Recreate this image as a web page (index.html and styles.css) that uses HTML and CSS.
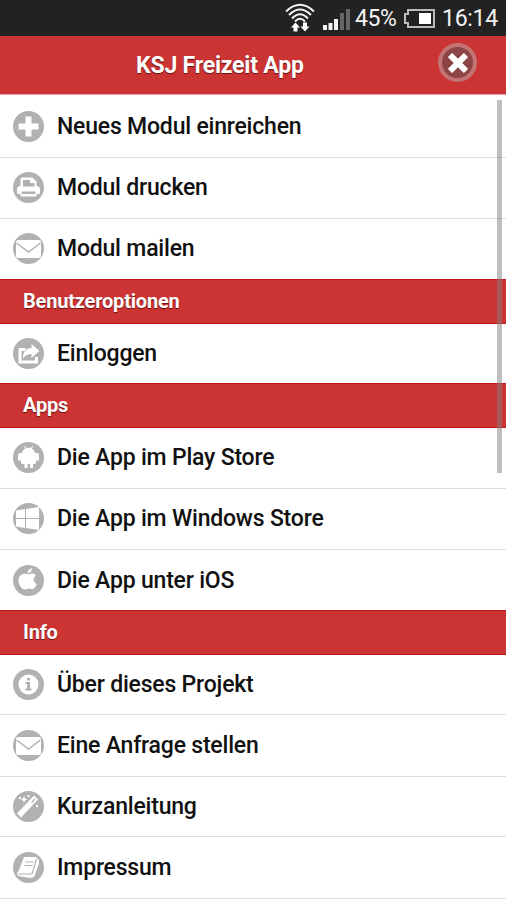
FILE: index.html
```
<!DOCTYPE html>
<html lang="de">
<head>
	<meta charset="UTF-8">
	<title>KSJ Freizeit App</title>
	<link rel="stylesheet" href="styles.css">
</head>
<body>
	<div class="status">
		<svg class="wifi" width="30" height="30" viewBox="0 0 30 30">
			<g fill="none" stroke="#f2f2f2" stroke-width="2">
				<path d="M1 8.500Q15 -5 29 8.500"/>
				<path d="M4 12Q15 1 26 12"/>
				<path d="M7 15.500Q15 7 23 15.500"/>
				<path d="M10 18.500Q15 13 20 18.500"/>
			</g>
			<path fill="#fff" d="M10.500 19.500l4.500 5h-2.500v4h-4v-4H6zM18 19.500h4v4h2.500l-4.500 5-4.500-5H18z"/>
		</svg>
		<svg class="signal" width="27" height="23" viewBox="0 0 27 23">
			<path fill="#f2f2f2" d="M0 17h4v5H0zM5.500 15h4v7h-4zM11 11h4v11h-4z"/>
			<path fill="#666" d="M17 5h4v17h-4zM23 1h4v21h-4z"/>
		</svg>
		<span class="percent">45%</span>
		<svg class="battery" width="32" height="19" viewBox="0 0 32 19">
			<path fill="none" stroke="#bbb" stroke-width="2" d="M5 1h26v17H5v-4H2V5h3z"/>
			<path fill="#fff" d="M16 4h12v11H16z"/>
		</svg>
		<span class="time">16:14</span>
	</div>
	<div class="header">
		<h1>KSJ Freizeit App</h1>
		<a class="close" href="#">
			<svg width="20" height="20" viewBox="0 0 20 20"><path fill="none" stroke="#fff" stroke-width="6" d="M2 2l16 16M18 2L2 18"/></svg>
		</a>
	</div>
	<div class="content">
		<ul>
			<li class="first">
				<svg class="icon" viewBox="0 0 31 31"><circle cx="15.500" cy="15.500" r="15.500"/><path class="w" d="M12.500 5.500h6v7h7v6h-7v7h-6v-7h-7v-6h7z"/></svg>
				<a href="#">Neues Modul einreichen</a>
			</li>
			<li class="up">
				<svg class="icon" viewBox="0 0 31 31"><circle cx="15.500" cy="15.500" r="15.500"/><path class="w" d="M9 5.500h10.500l4 4V14q3.500 0 3.500 3.500V21q0 1-1 1h-2.500v2.500h-16V22H5q-1 0-1-1v-3.500Q4 14 7.500 14V7q0-1.500 1.500-1.500z"/><path d="M10 8v6.500h11.500V11H17V8zM8.500 19.500h14V22h-14z"/></svg>
				<a href="#">Modul drucken</a>
			</li>
			<li class="mid up">
				<svg class="icon" viewBox="0 0 31 31"><circle cx="15.500" cy="15.500" r="15.500"/><rect class="w" x="3" y="7" width="25" height="18" rx="2"/><path class="l" d="M3.500 10l12 9 12-9"/></svg>
				<a href="#">Modul mailen</a>
			</li>
		</ul>
		<h2>Benutzeroptionen</h2>
		<ul>
			<li class="last">
				<svg class="icon" viewBox="0 0 31 31"><circle cx="15.500" cy="15.500" r="15.500"/><path fill="none" stroke="#fff" stroke-width="3" d="M12.500 11.500H7v12.500h16.500v-5"/><path class="w" d="M18.500 6l8 7-8 7v-4c-4 0-6.500 1.500-8.500 5 0-7 3-11 8.500-11z"/></svg>
				<a href="#">Einloggen</a>
			</li>
		</ul>
		<h2>Apps</h2>
		<ul>
			<li class="up">
				<svg class="icon" viewBox="0 0 31 31"><circle cx="15.500" cy="15.500" r="15.500"/><path class="w" d="M9 11q.5-3.500 3.500-4.500L11 4.500l.6-.5 2 2q2-.5 4 0l2-2 .6.500-1.500 2Q21.500 7.500 22 11h2q2 0 2 2v5.500h-3V21l-1 1h-2v4h-3v-4h-2.500v4h-3v-4H9l-1-1v-2.500H5V13q0-2 2-2z"/></svg>
				<a href="#">Die App im Play Store</a>
			</li>
			<li class="up">
				<svg class="icon" viewBox="0 0 31 31"><circle cx="15.500" cy="15.500" r="15.500"/><path class="w" d="M3 7.500l9-1.500v9H3zM13 6l13-2v11H13zM3 16h9v9l-9-1.500zM13 16h13v11l-13-2z"/></svg>
				<a href="#">Die App im Windows Store</a>
			</li>
			<li class="mid">
				<svg class="icon" viewBox="0 0 31 31"><circle cx="15.500" cy="15.500" r="15.500"/><path class="w" d="M14.500 8.500q0-4 4.500-5.500 0 4.500-4.500 5.500zM15.500 9.500c2-.4 4-2 6.500 0l1 1.300c-3.500 2-3 6.500.8 8.200-1.500 3.500-3 5.500-5 5.200-2-.9-3.500-.8-5 0C9.500 26 5.500 20 5.500 15.500c0-5.500 5-8 10-6z"/></svg>
				<a href="#">Die App unter iOS</a>
			</li>
		</ul>
		<h2>Info</h2>
		<ul>
			<li class="short">
				<svg class="icon" viewBox="0 0 31 31"><circle cx="15.500" cy="15.500" r="15.500"/><circle class="w" cx="15.500" cy="15.500" r="10"/><path d="M14 9h3v2.500h-3zM12.500 13H17v6.500h1.500v2h-6v-2H14V15h-1.500z"/></svg>
				<a href="#">Über dieses Projekt</a>
			</li>
			<li class="tall">
				<svg class="icon" viewBox="0 0 31 31"><circle cx="15.500" cy="15.500" r="15.500"/><rect class="w" x="3" y="7" width="25" height="18" rx="2"/><path class="l" d="M3.500 10l12 9 12-9"/></svg>
				<a href="#">Eine Anfrage stellen</a>
			</li>
			<li class="short">
				<svg class="icon" viewBox="0 0 31 31"><circle cx="15.500" cy="15.500" r="15.500"/><path stroke="#fff" stroke-width="5.500" d="M6 24.500L23 6.500"/><path stroke="#b1b1b1" stroke-width="1.500" d="M18.500 11.500l3.500-3.500"/><path class="w" d="M11 5l1 2.500 2.500 1-2.500 1-1 2.500-1-2.500-2.500-1 2.500-1zM6 6h2v2H6zM14.500 4h2v2h-2zM23 14h2v2h-2z"/></svg>
				<a href="#">Kurzanleitung</a>
			</li>
			<li class="tall">
				<svg class="icon" viewBox="0 0 31 31"><circle cx="15.500" cy="15.500" r="15.500"/><path class="w" d="M11 5h12l3 3v4l-5 13-4 1-12-2-1-3 2-3z"/><path fill="none" stroke="#b1b1b1" stroke-width="1.200" d="M23.500 7l-4.500 15H5.500M12.500 10h8M11.500 13.500h8"/></svg>
				<a href="#">Impressum</a>
			</li>
		</ul>
		<div class="scrollbar"></div>
	</div>
</body>
</html>
```
FILE: styles.css
```
body,h1,h2,ul,li{
	margin: 0;
	padding: 0;
}
body{
	height: 900px;
	overflow: hidden;
	background: #fff;
	font-family: Roboto, sans-serif;
}
ul{
	list-style-type: none;
}
a{
	color: #111;
	text-decoration: none;
}
svg{
	flex: none;
}
.status{
	display: flex;
	align-items: center;
	justify-content: flex-end;
	height: 36px;
	padding-right: 8px;
	background: #222;
	color: #f2f2f2;
	font-size: 23px;
	line-height: 36px;
}
.status span{
	padding-top: 2px;
	white-space: nowrap;
}
.wifi{
	margin-right: 8px;
}
.signal{
	margin: 2px 5px 0 0;
}
.percent{
	width: 48px;
	letter-spacing: -0.4px;
}
.battery{
	margin-right: 7px;
}
.time{
	width: 56px;
	letter-spacing: -0.3px;
}
.header{
	display: flex;
	align-items: center;
	justify-content: flex-end;
	box-sizing: border-box;
	height: 59px;
	padding-right: 29px;
	background: #c33;
	border-bottom: 1px solid #e8a0a0;
	color: #fff;
}
.header h1{
	width: 168px;
	margin-right: 134px;
	padding-top: 1px;
	font-size: 23px;
	font-weight: 700;
	letter-spacing: -0.2px;
	white-space: nowrap;
	text-shadow: 0 1px 1px #611;
}
.close{
	display: flex;
	align-items: center;
	justify-content: center;
	box-sizing: border-box;
	width: 39px;
	height: 39px;
	margin-bottom: 5px;
	border: 4px solid #c27474;
	border-radius: 50%;
	background: #8c4444;
}
.content{
	position: relative;
}
.content li{
	display: flex;
	align-items: center;
	box-sizing: border-box;
	height: 61px;
	padding-left: 13px;
	border-bottom: 1px solid #ddd;
}
.content li.first{
	height: 63px;
}
.content li.tall{
	height: 62px;
}
.content li.short{
	height: 60px;
}
.content li.last{
	height: 59px;
	border-bottom: 0;
}
.content li.mid{
	height: 60px;
	border-bottom: 0;
}
.content li.up{
	padding-bottom: 1px;
}
.content li a{
	margin-left: 13px;
	font-size: 23px;
	font-weight: 500;
	letter-spacing: -0.2px;
	white-space: nowrap;
}
.content h2{
	box-sizing: border-box;
	height: 45px;
	padding-left: 23px;
	background: #c33;
	border-top: 1px solid #c11818;
	border-bottom: 1px solid #c11818;
	color: #fff;
	font-size: 20px;
	font-weight: 700;
	letter-spacing: -0.2px;
	line-height: 43px;
	text-shadow: 0 1px 1px #611;
}
.icon{
	width: 31px;
	height: 31px;
	fill: #b1b1b1;
}
.icon .w{
	fill: #fff;
}
.icon .l{
	fill: none;
	stroke: #b1b1b1;
	stroke-width: 1.5;
}
/* lies over the list */
.scrollbar{
	position: absolute;
	top: 5px;
	right: 4px;
	width: 5px;
	height: 373px;
	background: rgba(128,128,128,0.5);
}
```
